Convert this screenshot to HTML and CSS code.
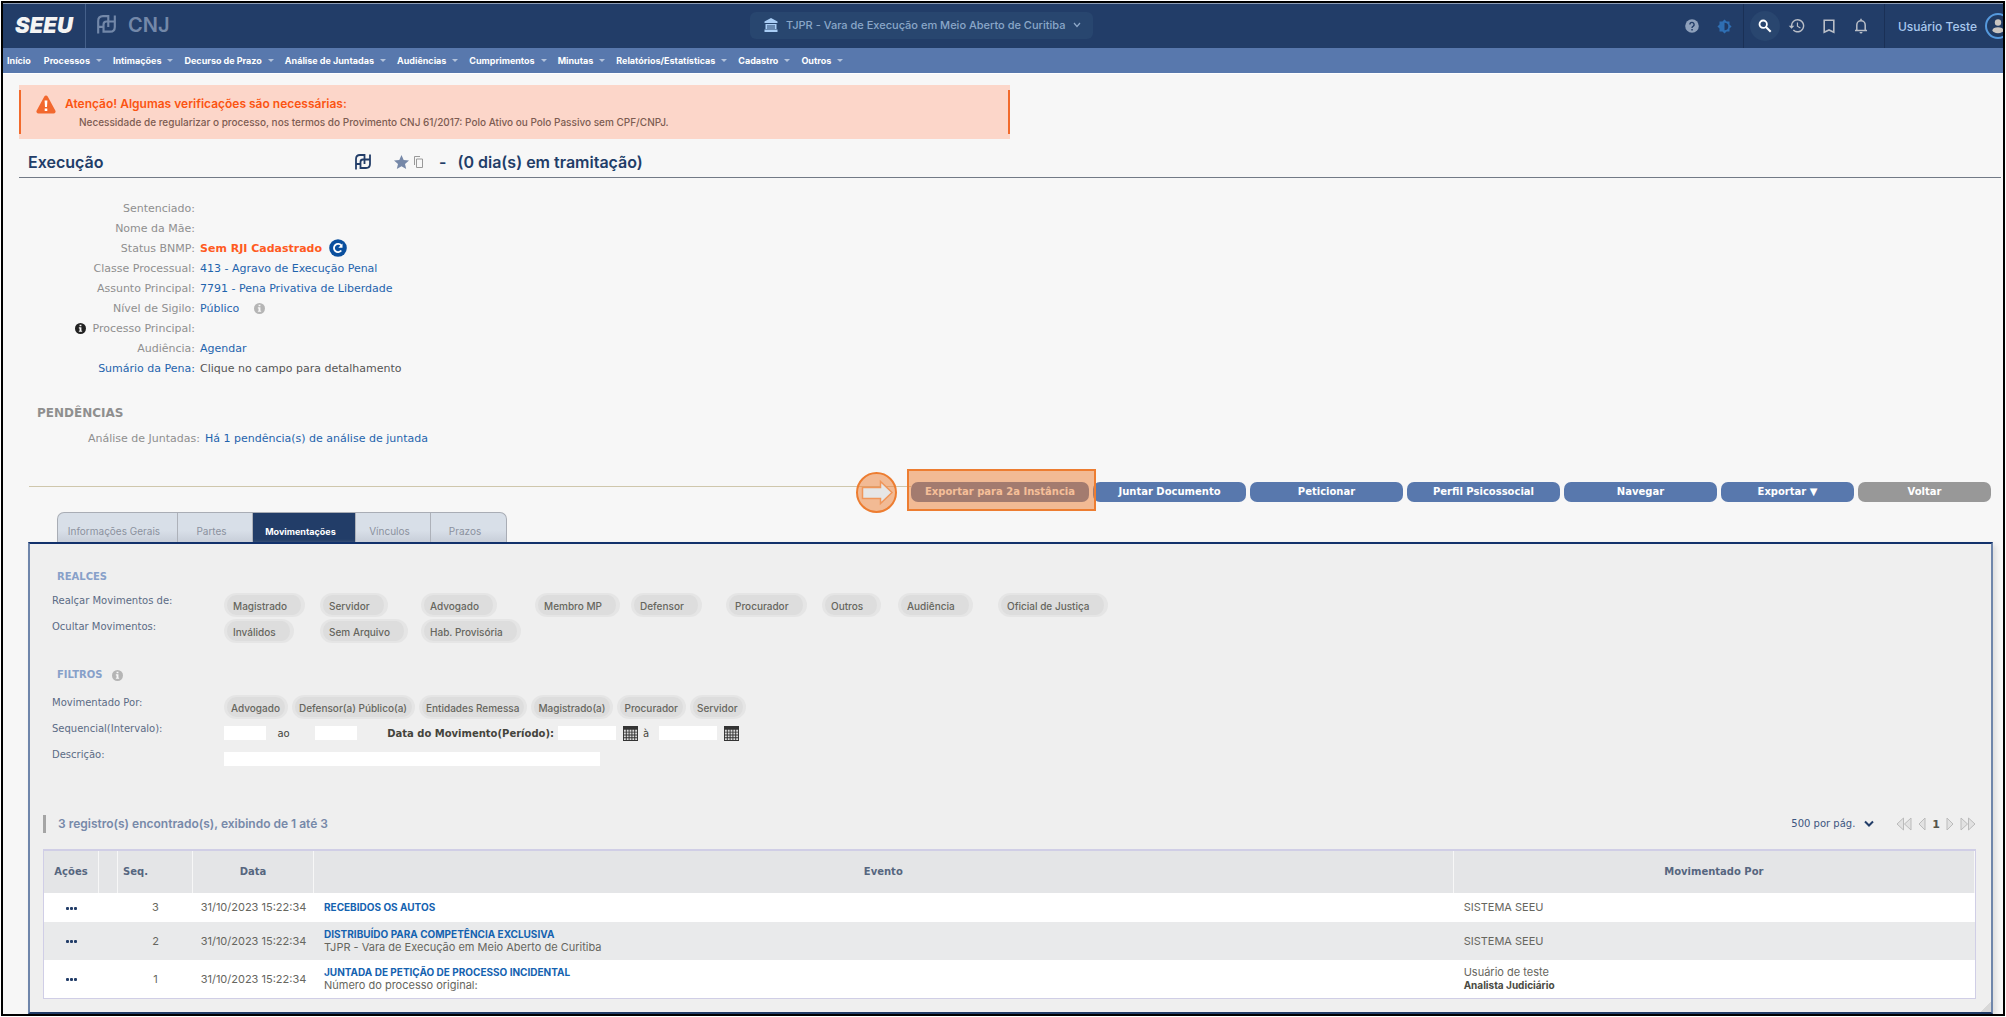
FILE: index.html
```
<!DOCTYPE html>
<html lang="pt-BR">
<head>
<meta charset="utf-8">
<meta name="viewport" content="width=device-width, initial-scale=1">
<title>SEEU - Execução</title>
<link rel="stylesheet" href="styles.css">
</head>
<body>
<svg class="defs" aria-hidden="true">
  <symbol id="mark" viewBox="0 0 16 16"><path d="M1 15.500V5Q1 1 5 1h4.500v9M1 10h4M15 .5V10q0 4-4 4H5.500V8q0-2.500 2.500-2.500h7" fill="none" stroke="currentColor" stroke-width="1.800"/></symbol>
  <symbol id="info" viewBox="0 0 12 12"><circle cx="6" cy="6" r="6" fill="currentColor"/><path d="M5 2h2v1.600H5zM4.200 4.700H7v3.700h.8v1.200H4.200V8.400H5V5.900h-.8z" fill="#f7f7f7"/></symbol>
  <symbol id="calendar" viewBox="0 0 16 16"><path d="M0 0h16v16H0z" fill="#333"/><path d="M1 4h2v2H1zM4 4h2v2H4zM7 4h2v2H7zM10 4h2v2h-2zM13 4h2v2h-2zM1 7h2v2H1zM4 7h2v2H4zM7 7h2v2H7zM10 7h2v2h-2zM13 7h2v2h-2zM1 10h2v2H1zM4 10h2v2H4zM7 10h2v2H7zM10 10h2v2h-2zM13 10h2v2h-2zM1 13h2v2H1zM4 13h2v2H4zM7 13h2v2H7zM10 13h2v2h-2zM13 13h2v2h-2z" fill="#ddd"/></symbol>
</svg>
<div class="page">
  <header class="topbar">
    <div class="brand">
      <a class="brand-seeu" href="#">SEEU</a>
      <a class="brand-cnj" href="#"><svg width="19" height="19"><use href="#mark"/></svg><span>CNJ</span></a>
    </div>
    <button type="button" class="court">
      <svg width="14" height="14" viewBox="0 0 14 14"><path d="M7 0l6.500 3.500V5H.5V3.500zM1.500 6h2v5h-2zM4.500 6h1v5h-1zM6.500 6h1v5h-1zM8.500 6h1v5h-1zM10.500 6h2v5h-2zM.5 11.500h13V14H.5zM2 6h10v1H2z" fill="#a9cdf5"/></svg>
      <span>TJPR - Vara de Execução em Meio Aberto de Curitiba</span>
      <svg width="8" height="6" viewBox="0 0 8 6"><path d="M1 1l3 3.500L7 1" fill="none" stroke="#8fa9c9" stroke-width="1.200"/></svg>
    </button>
    <div class="tools">
      <div class="tool-group">
        <button type="button" class="tool" aria-label="Ajuda"><svg width="14" height="14" viewBox="0 0 14 14"><circle cx="7" cy="7" r="6.800" fill="#8ea0bb"/><path d="M4.900 5.500a2.100 2.100 0 1 1 3.400 1.600C7.500 7.700 7 8 7 8.900" fill="none" stroke="#223d68" stroke-width="1.400"/><path d="M6.300 10h1.500v1.400H6.300z" fill="#223d68"/></svg></button>
        <button type="button" class="tool" aria-label="Contraste"><svg width="15" height="15" viewBox="0 0 24 24"><path d="M20 8.700V4h-4.700L12 .7 8.700 4H4v4.700L.7 12 4 15.300V20h4.700l3.300 3.300 3.300-3.300H20v-4.700l3.300-3.300z" fill="#2f6fb3"/><path d="M12 6a6 6 0 0 1 0 12z" fill="#203a64"/></svg></button>
      </div>
      <div class="tool-group">
        <button type="button" class="tool tool-active" aria-label="Buscar"><svg width="14" height="14" viewBox="0 0 14 14"><circle cx="5.200" cy="5.200" r="3.700" fill="none" stroke="#fff" stroke-width="1.800"/><path d="M8 8l4.700 4.700" stroke="#fff" stroke-width="2"/></svg></button>
        <button type="button" class="tool" aria-label="Histórico"><svg width="17" height="15" viewBox="0 0 24 21"><path d="M13.500 0A9.500 9.500 0 0 0 4 9.500H1l4 4.200 4-4.200H6a7.500 7.500 0 1 1 2.200 5.300l-1.400 1.400A9.500 9.500 0 1 0 13.500 0zM12.500 5v5.500l4.600 2.700.8-1.300-3.700-2.200V5z" fill="#b9bec7"/></svg></button>
        <button type="button" class="tool" aria-label="Favoritos"><svg width="12" height="15" viewBox="0 0 12 15"><path d="M1.200 1.200h9.600v12L6 11l-4.800 2.200z" fill="none" stroke="#b9bec7" stroke-width="1.600"/></svg></button>
        <button type="button" class="tool" aria-label="Notificações"><svg width="14" height="17" viewBox="0 0 14 17"><path d="M1 12.500h12M2.800 12V7a4.200 4.200 0 0 1 8.400 0v5M7 2.500V.8" fill="none" stroke="#b9bec7" stroke-width="1.500"/><path d="M5.500 14h3a1.500 1.500 0 0 1-3 0z" fill="#b9bec7"/></svg></button>
      </div>
      <button type="button" class="user">
        <span>Usuário Teste</span>
        <svg width="26" height="26" viewBox="0 0 26 26"><circle cx="13" cy="13" r="12" fill="#203a62" stroke="#5599dd" stroke-width="2"/><circle cx="13" cy="9.500" r="3.200" fill="#c9c4c0"/><ellipse cx="13" cy="17.200" rx="5.500" ry="3" fill="#c9c4c0"/></svg>
      </button>
    </div>
  </header>
  <nav class="menu" aria-label="Principal">
    <a class="home" href="#">Início</a>
    <a class="has-sub" href="#">Processos</a>
    <a class="has-sub" href="#">Intimações</a>
    <a class="has-sub" href="#">Decurso de Prazo</a>
    <a class="has-sub" href="#">Análise de Juntadas</a>
    <a class="has-sub" href="#">Audiências</a>
    <a class="has-sub" href="#">Cumprimentos</a>
    <a class="has-sub" href="#">Minutas</a>
    <a class="has-sub" href="#">Relatórios/Estatísticas</a>
    <a class="has-sub" href="#">Cadastro</a>
    <a class="has-sub" href="#">Outros</a>
  </nav>

  <main class="content">
    <section class="alert">
      <svg width="20" height="19" viewBox="0 0 20 19"><path d="M8.300 1.500a2 2 0 0 1 3.400 0l7.600 14a2 2 0 0 1-1.700 3H2.400a2 2 0 0 1-1.700-3z" fill="#f2682e"/><path d="M8.600 5.500h2.800L11 12H9zM8.700 13.500h2.600v2.500H8.700z" fill="#fff"/></svg>
      <div>
        <h2>Atenção! Algumas verificações são necessárias:</h2>
        <p>Necessidade de regularizar o processo, nos termos do Provimento CNJ 61/2017: Polo Ativo ou Polo Passivo sem CPF/CNPJ.</p>
      </div>
    </section>

    <div class="title">
      <h1>Execução</h1>
      <svg class="title-mark" width="16" height="16"><use href="#mark"/></svg>
      <svg class="title-star" width="15" height="14" viewBox="0 0 15 14"><path d="M7.500 0l2.200 4.900 5.300.5-4 3.500L12.200 14l-4.700-2.700L2.800 14 4 8.900 0 5.400l5.300-.5z" fill="#7688a8"/></svg>
      <svg class="title-copy" width="9" height="12" viewBox="0 0 9 12"><path d="M2.500 3h6v8.500h-6zM.5 9V.5H6" fill="none" stroke="#999"/></svg>
      <span class="title-dash">-</span>
      <span>(0 dia(s) em tramitação)</span>
    </div>

    <dl class="details">
      <dt>Sentenciado:</dt><dd></dd>
      <dt>Nome da Mãe:</dt><dd></dd>
      <dt>Status BNMP:</dt>
      <dd><strong>Sem RJI Cadastrado</strong>
        <button type="button" class="refresh" aria-label="Atualizar"><svg width="18" height="18" viewBox="0 0 18 18"><circle cx="9" cy="9" r="8.800" fill="#0a4f9e"/><path d="M12.300 11.500a4.100 4.100 0 1 1 0-5" fill="none" stroke="#fff" stroke-width="1.800"/><path d="M13.500 4.500v4.200H9.300z" fill="#fff"/></svg></button></dd>
      <dt>Classe Processual:</dt><dd><a href="#">413 - Agravo de Execução Penal</a></dd>
      <dt>Assunto Principal:</dt><dd><a href="#">7791 - Pena Privativa de Liberdade</a></dd>
      <dt>Nível de Sigilo:</dt><dd><a href="#">Público</a><svg class="info-light" width="11" height="11"><use href="#info"/></svg></dd>
      <dt><svg class="info-dark" width="11" height="11"><use href="#info"/></svg>Processo Principal:</dt><dd></dd>
      <dt>Audiência:</dt><dd><a href="#">Agendar</a></dd>
      <dt><a href="#">Sumário da Pena:</a></dt><dd>Clique no campo para detalhamento</dd>
    </dl>

    <h2 class="pending-title">PENDÊNCIAS</h2>
    <dl class="details pending">
      <dt>Análise de Juntadas:</dt><dd><a href="#">Há 1 pendência(s) de análise de juntada</a></dd>
    </dl>

    <div class="actions">
      <div class="primary-action">
        <button type="button" class="btn">Exportar para 2a Instância</button>
        <span class="highlight"></span>
        <svg class="pointer" width="41" height="41" viewBox="0 0 41 41" aria-hidden="true"><circle cx="20.500" cy="20.500" r="19.500" fill="#ed7d31" fill-opacity=".5" stroke="#ed7d31" stroke-width="2"/><path d="M6.500 15.500h18V9.500L36 20.500 24.500 31.500v-5h-18z" fill="#e6e6e6" stroke="#f0965a" stroke-width="1.500"/></svg>
      </div>
      <button type="button" class="btn">Juntar Documento</button>
      <button type="button" class="btn">Peticionar</button>
      <button type="button" class="btn">Perfil Psicossocial</button>
      <button type="button" class="btn">Navegar</button>
      <button type="button" class="btn btn-small">Exportar ▼</button>
      <button type="button" class="btn btn-small btn-back">Voltar</button>
    </div>

    <nav class="tabs" aria-label="Seções do processo">
      <a class="tab-wide" href="#">Informações Gerais</a>
      <a href="#">Partes</a>
      <a class="current" href="#" aria-current="page">Movimentações</a>
      <a href="#">Vínculos</a>
      <a href="#">Prazos</a>
    </nav>

    <section class="panel">
      <h3>REALCES</h3>
      <div class="form">
        <span class="label">Realçar Movimentos de:</span>
        <div class="chips chips-grid">
          <button type="button" class="chip">Magistrado</button>
          <button type="button" class="chip">Servidor</button>
          <button type="button" class="chip">Advogado</button>
          <button type="button" class="chip">Membro MP</button>
          <button type="button" class="chip">Defensor</button>
          <button type="button" class="chip">Procurador</button>
          <button type="button" class="chip">Outros</button>
          <button type="button" class="chip">Audiência</button>
          <button type="button" class="chip">Oficial de Justiça</button>
        </div>
        <span class="label">Ocultar Movimentos:</span>
        <div class="chips chips-grid">
          <button type="button" class="chip">Inválidos</button>
          <button type="button" class="chip">Sem Arquivo</button>
          <button type="button" class="chip">Hab. Provisória</button>
        </div>
      </div>

      <h3 class="filters-title">FILTROS <svg class="info-light" width="11" height="11"><use href="#info"/></svg></h3>
      <form class="form">
        <span class="label">Movimentado Por:</span>
        <div class="chips">
          <button type="button" class="chip chip-tight">Advogado</button>
          <button type="button" class="chip chip-tight">Defensor(a) Público(a)</button>
          <button type="button" class="chip chip-tight">Entidades Remessa</button>
          <button type="button" class="chip chip-tight">Magistrado(a)</button>
          <button type="button" class="chip chip-tight">Procurador</button>
          <button type="button" class="chip chip-tight">Servidor</button>
        </div>
        <label class="label" for="seq-from">Sequencial(Intervalo):</label>
        <div class="fields">
          <input class="seq" id="seq-from" type="text">
          <label class="to" for="seq-to">ao</label>
          <input class="seq" id="seq-to" type="text">
          <label class="period" for="date-from">Data do Movimento(Período):</label>
          <input class="date" id="date-from" type="text">
          <button type="button" class="cal" aria-label="Calendário inicial"><svg width="15" height="15"><use href="#calendar"/></svg></button>
          <label class="until" for="date-to">à</label>
          <input class="date" id="date-to" type="text">
          <button type="button" class="cal" aria-label="Calendário final"><svg width="15" height="15"><use href="#calendar"/></svg></button>
        </div>
        <label class="label" for="description">Descrição:</label>
        <div class="fields"><input class="description" id="description" type="text"></div>
      </form>

      <div class="results">
        <p>3 registro(s) encontrado(s), exibindo de 1 até 3</p>
        <div class="pager">
          <select aria-label="Registros por página"><option>500 por pág.</option></select>
          <div class="pages">
            <a href="#" aria-label="Primeira página"><svg width="16" height="14" viewBox="0 0 16 14"><path d="M7.500 1v12L1 7zM15 1v12L8.500 7z" fill="#e2e2e2" stroke="#bbb"/></svg></a>
            <a href="#" aria-label="Página anterior"><svg width="8" height="14" viewBox="0 0 8 14"><path d="M7 1v12L1 7z" fill="#e2e2e2" stroke="#bbb"/></svg></a>
            <strong>1</strong>
            <a href="#" aria-label="Próxima página"><svg width="8" height="14" viewBox="0 0 8 14"><path d="M1 1v12l6-6z" fill="#e2e2e2" stroke="#bbb"/></svg></a>
            <a href="#" aria-label="Última página"><svg width="16" height="14" viewBox="0 0 16 14"><path d="M1 1v12l6.500-6zM8.500 1v12L15 7z" fill="#e2e2e2" stroke="#bbb"/></svg></a>
          </div>
        </div>
      </div>

      <table class="moves">
        <colgroup><col class="c-actions"><col class="c-mark"><col class="c-seq"><col class="c-date"><col><col class="c-by"></colgroup>
        <thead>
          <tr><th>Ações</th><th></th><th class="left">Seq.</th><th>Data</th><th>Evento</th><th>Movimentado Por</th></tr>
        </thead>
        <tbody>
          <tr class="single">
            <td><button type="button" class="more" aria-label="Ações"><i></i><i></i><i></i></button></td><td></td><td>3</td><td>31/10/2023 15:22:34</td>
            <td class="text"><a href="#">RECEBIDOS OS AUTOS</a></td>
            <td class="text">SISTEMA SEEU</td>
          </tr>
          <tr>
            <td><button type="button" class="more" aria-label="Ações"><i></i><i></i><i></i></button></td><td></td><td>2</td><td>31/10/2023 15:22:34</td>
            <td class="text"><a href="#">DISTRIBUÍDO PARA COMPETÊNCIA EXCLUSIVA</a><br>TJPR - Vara de Execução em Meio Aberto de Curitiba</td>
            <td class="text">SISTEMA SEEU</td>
          </tr>
          <tr>
            <td><button type="button" class="more" aria-label="Ações"><i></i><i></i><i></i></button></td><td></td><td>1</td><td>31/10/2023 15:22:34</td>
            <td class="text"><a href="#">JUNTADA DE PETIÇÃO DE PROCESSO INCIDENTAL</a><br>Número do processo original:</td>
            <td class="text">Usuário de teste<br><strong>Analista Judiciário</strong></td>
          </tr>
        </tbody>
      </table>
    </section>
  </main>
</div>
</body>
</html>
```
FILE: styles.css
```
* { box-sizing: border-box; }

body {
  margin: 0;
  background: #fff;
  color: #555;
  font-family: Inter, "Liberation Sans", sans-serif;
  font-size: 11px;
}

h1, h2, h3, p, dl, dd { margin: 0; }
a { color: inherit; text-decoration: none; }
svg { display: block; flex: none; }
button { padding: 0; border: 0; background: none; color: inherit; font: inherit; cursor: pointer; }
.defs { position: absolute; width: 0; height: 0; }

.page {
  display: flex;
  flex-direction: column;
  min-height: calc(100vh - 2px);
  margin: 1px;
  border: 2px solid #000;
  background: #f7f7f7;
  overflow: hidden;
}

/* Top bar */
.topbar {
  display: flex;
  justify-content: space-between;
  align-items: center;
  height: 45px;
  padding-bottom: 2px;
  background: #223d68;
  border-top: 1px solid #8c9cb5;
  overflow: hidden;
}
.brand { display: flex; align-items: center; align-self: stretch; margin-bottom: -2px; }
.brand-seeu {
  display: flex;
  align-items: center;
  align-self: stretch;
  width: 83px;
  padding: 0 0 3px 12px;
  border-right: 1px solid #45608a;
  color: #f4f4f4;
  font: italic 900 22px/24px Inter, "Liberation Sans", sans-serif;
}
.brand-cnj {
  display: flex;
  align-items: center;
  gap: 12px;
  padding: 0 0 3px 11px;
  color: #7388a9;
  font-size: 20px;
  font-weight: 600;
}
.court {
  display: flex;
  align-items: center;
  gap: 8px;
  height: 27px;
  padding: 0 12px 0 14px;
  border-radius: 6px;
  background: #28466f;
  color: #8aa6c8;
  font-weight: 500;
}
.tools { display: flex; align-items: stretch; height: 44px; margin: 0 -8px -2px 0; }
.tool-group {
  display: flex;
  align-items: center;
  gap: 2px;
  padding: 0 8px 0 6px;
  border-right: 1px solid #1a3056;
}
.tool-group:first-child { gap: 3px; padding: 0 3px; }
.tool {
  display: flex;
  align-items: center;
  justify-content: center;
  width: 30px;
  height: 30px;
  border-radius: 50%;
}
.tool-active { background: #29466f; }
.user {
  display: flex;
  align-items: center;
  gap: 8px;
  padding-left: 13px;
  color: #a8c8ee;
  font-size: 12px;
  font-weight: 500;
}

/* Menu */
.menu {
  display: flex;
  align-items: center;
  gap: 11px;
  height: 26px;
  padding-left: 4px;
  border-bottom: 1px solid #fff;
  background: #5878ad;
  color: #fff;
  font-size: 9px;
  font-weight: 700;
}
.menu a { display: flex; align-items: center; gap: 6px; }
.menu .home { margin-right: 2px; }
.has-sub::after {
  content: "";
  border: 3px solid transparent;
  border-top-color: #b4c3dc;
  border-bottom: 0;
}

.content {
  display: flex;
  flex: 1;
  flex-direction: column;
  padding: 11px 2px 0 16px;
}

/* Alert */
.alert {
  display: flex;
  gap: 9px;
  width: 50%;
  height: 54px;
  padding: 10px 17px;
  background:
    linear-gradient(#f26a2c, #f26a2c) left / 2px 44px no-repeat,
    linear-gradient(#f26a2c, #f26a2c) right / 2px 44px no-repeat,
    #fcd6c9;
}
.alert h2 { color: #fb5412; font-size: 12px; font-weight: 600; line-height: 18px; }
.alert p { padding-left: 14px; color: #7d5c52; font-size: 10px; font-weight: 500; line-height: 18px; }

/* Title */
.title {
  display: flex;
  align-items: center;
  height: 39px;
  padding: 8px 0 0 9px;
  border-bottom: 1px solid #727a86;
  color: #223d68;
  font-size: 16px;
  font-weight: 600;
}
.title h1 { width: 327px; font-size: 16px; font-weight: 600; }
.title-star { margin-left: 23px; }
.title-copy { margin-left: 5px; }
.title-dash { margin: 0 11px 0 16px; }

/* Details */
.details {
  display: grid;
  grid-template-columns: 176px 1fr;
  grid-auto-rows: 20px;
  column-gap: 5px;
  align-items: center;
  margin-top: 20px;
  font-family: "DejaVu Sans", sans-serif;
}
.details dt { display: flex; align-items: center; justify-content: flex-end; gap: 6px; color: #8f8f8f; }
.details dd { display: flex; align-items: center; gap: 7px; color: #555; }
.details a { color: #1f64ad; }
.details strong { color: #ff5b1f; }
.info-light { color: #b5b5b5; }
.details .info-light { margin-left: 8px; }
.info-dark { color: #222; }

.pending-title {
  margin: 27px 0 0 18px;
  color: #8f8f8f;
  font: bold 12px/16px "DejaVu Sans", sans-serif;
}
.pending { grid-template-columns: 181px 1fr; margin-top: 7px; }

/* Actions */
.actions {
  display: flex;
  gap: 4px;
  margin: 34px 10px 0;
}
.actions::before {
  content: "";
  flex: 1;
  margin: 4px -4px 0 0;
  border-top: 1px solid #cfc7ac;
}
.btn {
  width: 153px;
  height: 20px;
  border-radius: 7px;
  background: #5878ad;
  color: #fff;
  font: bold 10px/20px "DejaVu Sans", sans-serif;
}
.btn-small { width: 133px; }
.btn-back { background: #989898; }
.primary-action { position: relative; }
.primary-action .btn { display: block; width: 178px; }
.highlight {
  position: absolute;
  inset: -13px -7px -9px -4px;
  border: 2px solid #ed7d31;
  background: rgba(237, 125, 49, .5);
}
.pointer { position: absolute; top: -10px; left: -55px; }

/* Tabs */
.tabs {
  display: flex;
  align-self: flex-start;
  height: 30px;
  margin: 10px 0 0 38px;
  border: 1px solid #a9adb5;
  border-bottom: 0;
  border-radius: 7px 7px 0 0;
  background: linear-gradient(#d8dfe8 60%, #c8ced9);
  color: #8b919e;
  font-size: 10px;
  overflow: hidden;
}
.tabs a {
  display: flex;
  align-items: center;
  justify-content: center;
  width: 75px;
  padding: 7px 7px 0 0;
  border-right: 1px solid #adb1b9;
}
.tabs a:last-child { border-right: 0; }
.tabs .tab-wide { width: 120px; }
.tabs .current { width: 103px; background: #223d68; color: #fff; font-size: 9px; font-weight: 700; }

/* Panel */
.panel {
  flex: 1;
  margin: 0 8px 0 9px;
  padding: 26px 15px 12px 13px;
  border: solid #6f86ab;
  border-width: 0 2px 2px;
  border-top: 2px solid #12316b;
  border-bottom-color: #223d68;
  background: linear-gradient(135deg, transparent 50%, #d8d8d8 50%) right bottom / 10px 10px no-repeat #efefef;
  box-shadow: 3px 3px 5px #ddd;
}
.panel h3 {
  display: flex;
  align-items: center;
  gap: 9px;
  margin-left: 14px;
  color: #87a0c9;
  font: bold 10px/14px "DejaVu Sans", sans-serif;
}
.panel .filters-title { margin-top: 25px; }

.form {
  display: grid;
  grid-template-columns: 163px 1fr;
  grid-auto-rows: 24px;
  gap: 2px 9px;
  margin-top: 9px;
  padding-left: 9px;
  align-items: center;
}
form.form { margin-top: 13px; }
.label {
  padding-bottom: 10px;
  color: #5b6b85;
  font-family: "DejaVu Sans", sans-serif;
  font-size: 10px;
}
.chips { display: flex; gap: 4px; }
.chips-grid {
  display: grid;
  grid-template-columns: 96px 101px 114px 96px 95px 96px 76px 100px auto;
  gap: 0;
  justify-content: start;
  justify-items: start;
}
.chip {
  height: 24px;
  padding: 2px 14px 0 6px;
  border: solid #e5e5e5;
  border-width: 2px 4px 2px 3px;
  border-radius: 12px;
  background: #dddddd;
  color: #66665e;
  font-size: 10px;
  font-weight: 500;
  white-space: nowrap;
}
.chip-tight { padding: 2px 5px 0 4px; border-width: 2px 3px; }

.fields {
  display: flex;
  align-items: center;
  color: #44443c;
  font-family: "DejaVu Sans", sans-serif;
  font-size: 10px;
}
.fields input { height: 14px; padding: 0 2px; border: 0; background: #fff; font: inherit; }
.seq { width: 42px; }
.to { width: 49px; text-align: center; padding-right: 14px; }
.period { width: 201px; padding-right: 4px; font-weight: bold; text-align: right; }
.date { width: 58px; }
.cal { margin-left: 7px; }
.until { margin: 0 10px 0 5px; }
.description { width: 376px; }

/* Results */
.results {
  display: flex;
  align-items: center;
  justify-content: space-between;
  height: 18px;
  margin-top: 44px;
}
.results p {
  padding-left: 12px;
  border-left: 3px solid #a5a5a5;
  color: #7789a9;
  font-size: 12px;
  font-weight: 600;
  line-height: 18px;
}
.pager { display: flex; align-items: center; gap: 22px; font-family: "DejaVu Sans", sans-serif; }
.pager select {
  width: 83px;
  padding: 0;
  border: 0;
  appearance: none;
  background: url("data:image/svg+xml,%3Csvg xmlns='http://www.w3.org/2000/svg' width='10' height='8'%3E%3Cpath d='M1 1.500l4 4 4-4' fill='none' stroke='%23223d68' stroke-width='2'/%3E%3C/svg%3E") right center no-repeat;
  color: #3d5680;
  font: 10px/14px "DejaVu Sans", sans-serif;
}
.pages { display: flex; align-items: center; gap: 6px; }
.pages strong { color: #55554c; }

/* Table */
.moves {
  width: 100%;
  margin-top: 16px;
  border: 1px solid #d0cee6;
  border-top-width: 2px;
  border-collapse: separate;
  border-spacing: 0;
  table-layout: fixed;
  background: #fff;
  color: #66665e;
  text-align: center;
}
.c-actions { width: 55px; }
.c-mark { width: 19px; }
.c-seq { width: 75px; }
.c-date { width: 121px; }
.c-by { width: 27%; }
.moves th {
  height: 42px;
  padding: 0 5px;
  border-right: 1px solid #f7f7f7;
  background: #e4e5e7;
  color: #56667f;
  font: bold 10px/14px "DejaVu Sans", sans-serif;
}
.moves .left { text-align: left; }
.moves td { height: 38px; padding: 0; font-size: 11px; line-height: 13px; }
.moves .single td { height: 29px; }
.moves tbody tr:nth-child(2) { background: #e9eaeb; }
.moves .text { padding: 0 10px; text-align: left; }
.moves .text a { color: #1462b0; font-size: 10px; font-weight: 700; }
.moves .text strong { color: #4a4a42; font-size: 10px; font-weight: 700; }
.more { display: inline-flex; gap: 1px; padding: 4px; vertical-align: middle; }
.more i { width: 3px; height: 3px; border-radius: 1px; background: #223d68; }
```
